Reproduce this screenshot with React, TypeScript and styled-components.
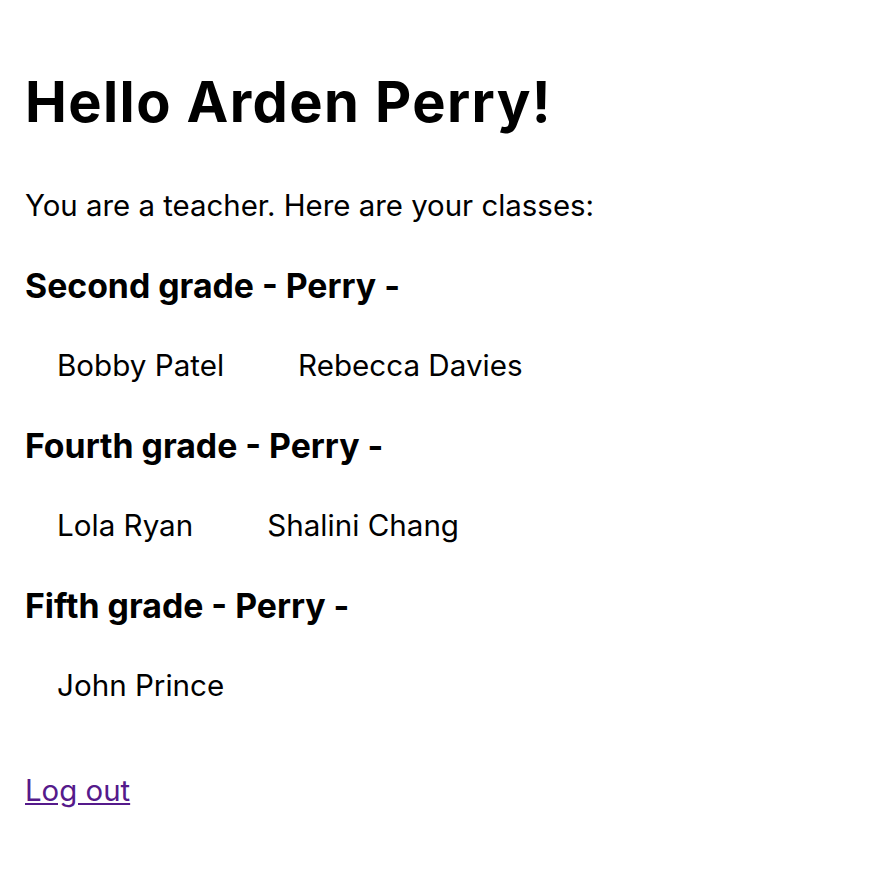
import React from "react";
import styled, { createGlobalStyle } from "styled-components";

const Global = createGlobalStyle`
  html, body { margin: 0; padding: 0; background: #ffffff; }
  body { font-family: "Inter", "Lato", sans-serif; color: #000; }
`;

const Page = styled.main`
  padding: 70px 25px 0 25px;
  display: flex;
  flex-direction: column;
  align-items: flex-start;
`;

const Title = styled.h1`
  margin: 0;
  font-size: 56px;
  line-height: 64px;
  font-weight: 700;
  letter-spacing: 1.4px;
`;

const Intro = styled.p`
  margin: 52px 0 0 0;
  font-size: 29.4px;
  line-height: 40px;
  font-weight: 400;
`;

const ClassList = styled.section`
  display: flex;
  flex-direction: column;
  margin-top: 40px;
  gap: 41px;
`;

const ClassBlock = styled.div`
  display: flex;
  flex-direction: column;
  gap: 39px;
`;

const ClassTitle = styled.h3`
  margin: 0;
  font-size: 33.8px;
  line-height: 40px;
  font-weight: 700;
`;

const Students = styled.ul`
  list-style: none;
  margin: 0;
  padding: 0 0 0 32px;
  display: flex;
  gap: 74px;
`;

const Student = styled.li`
  font-size: 29.6px;
  line-height: 40px;
`;

const LogOut = styled.a`
  margin-top: 66px;
  font-size: 29.4px;
  line-height: 40px;
  color: #551a8b;
  text-decoration: underline;
`;

const classes = [
  { name: "Second grade - Perry -", students: ["Bobby Patel", "Rebecca Davies"] },
  { name: "Fourth grade - Perry -", students: ["Lola Ryan", "Shalini Chang"] },
  { name: "Fifth grade - Perry -", students: ["John Prince"] },
];

export default function App() {
  return (
    <>
      <Global />
      <Page>
        <Title>Hello Arden Perry!</Title>
        <Intro>You are a teacher. Here are your classes:</Intro>
        <ClassList>
          {classes.map((c) => (
            <ClassBlock key={c.name}>
              <ClassTitle>{c.name}</ClassTitle>
              <Students>
                {c.students.map((s) => (
                  <Student key={s}>{s}</Student>
                ))}
              </Students>
            </ClassBlock>
          ))}
        </ClassList>
        <LogOut href="#">Log out</LogOut>
      </Page>
    </>
  );
}
